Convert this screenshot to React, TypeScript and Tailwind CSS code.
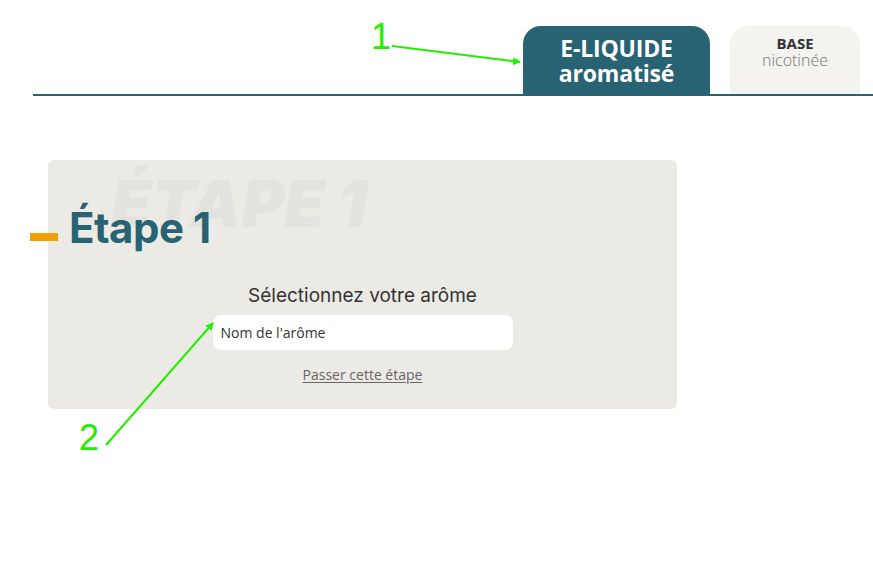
import React from "react";

export default function App() {
  return (
    <div className="relative w-[873px] h-[571px] bg-white overflow-hidden" style={{ fontFamily: "'Open Sans', sans-serif" }}>
      {/* Tabs header */}
      <div className="flex justify-end items-end gap-[20px] pr-[13px] pt-[26px]">
        <div className="w-[187px] h-[68px] bg-[#286374] rounded-t-[18px] flex flex-col items-center justify-center text-white font-bold text-[23px] leading-[25px] pt-[2px] tracking-[-0.2px]">
          <span>E-LIQUIDE</span>
          <span>aromatisé</span>
        </div>
        <div className="w-[130px] h-[68px] bg-[#f4f3ef] rounded-t-[18px] flex flex-col items-center pt-[9px] text-[16px] leading-[17px]">
          <span className="font-bold text-[#333] text-[15px]">BASE</span>
          <span className="text-[#777] font-light">nicotinée</span>
        </div>
      </div>
      <div className="ml-[33px] h-[2px] bg-[#286374]" />

      {/* Card */}
      <div className="mt-[64px] ml-[48px] w-[629px] h-[249px] bg-[#eceae5] rounded-[6px] relative flex flex-col">
        <div className="relative h-[100px]">
          <span
            className="absolute left-[63px] top-[4px] text-[#e2e2de] italic font-black text-[65px] leading-[80px] select-none"
            style={{ fontFamily: "Inter, sans-serif" }}
          >
            ÉTAPE 1
          </span>
          <div className="absolute left-[-18px] top-[73px] w-[28px] h-[8px] bg-[#f0a000]" />
          <span
            className="absolute left-[21px] top-[43px] text-[#286374] font-bold text-[42px] leading-[50px] tracking-[-0.5px]"
            style={{ fontFamily: "Inter, sans-serif" }}
          >
            Étape 1
          </span>
        </div>
        <div className="flex flex-col items-center mt-[24px]">
          <div className="text-[19px] leading-[24px] text-[#333]" style={{ fontFamily: "Inter, sans-serif" }}>
            Sélectionnez votre arôme
          </div>
          <div className="mt-[7px] w-[300px] h-[35px] bg-white rounded-[8px] flex items-center px-[8px] text-[14px] text-[#333]">
            Nom de l'arôme
          </div>
          <div className="mt-[14px] text-[14px] text-[#666] underline underline-offset-2">Passer cette étape</div>
        </div>
      </div>

      {/* Annotations */}
      <span className="absolute left-[371px] top-[17px] text-[36px] leading-[40px] text-[#22ee00]" style={{ fontFamily: "'Liberation Sans', Arial, sans-serif" }}>
        1
      </span>
      <span className="absolute left-[79px] top-[418px] text-[36px] leading-[40px] text-[#22ee00]" style={{ fontFamily: "'Liberation Sans', Arial, sans-serif" }}>
        2
      </span>
      <svg className="absolute left-0 top-0" width="873" height="571">
        <defs>
          <marker id="ah" markerWidth="8" markerHeight="8" refX="7" refY="4" orient="auto" markerUnits="userSpaceOnUse">
            <path d="M0,0 L8,4 L0,8 z" fill="#22ee00" />
          </marker>
        </defs>
        <line x1="392" y1="46" x2="520" y2="62" stroke="#22ee00" strokeWidth="2" markerEnd="url(#ah)" />
        <line x1="106" y1="445" x2="213" y2="323" stroke="#22ee00" strokeWidth="2" markerEnd="url(#ah)" />
      </svg>
    </div>
  );
}
